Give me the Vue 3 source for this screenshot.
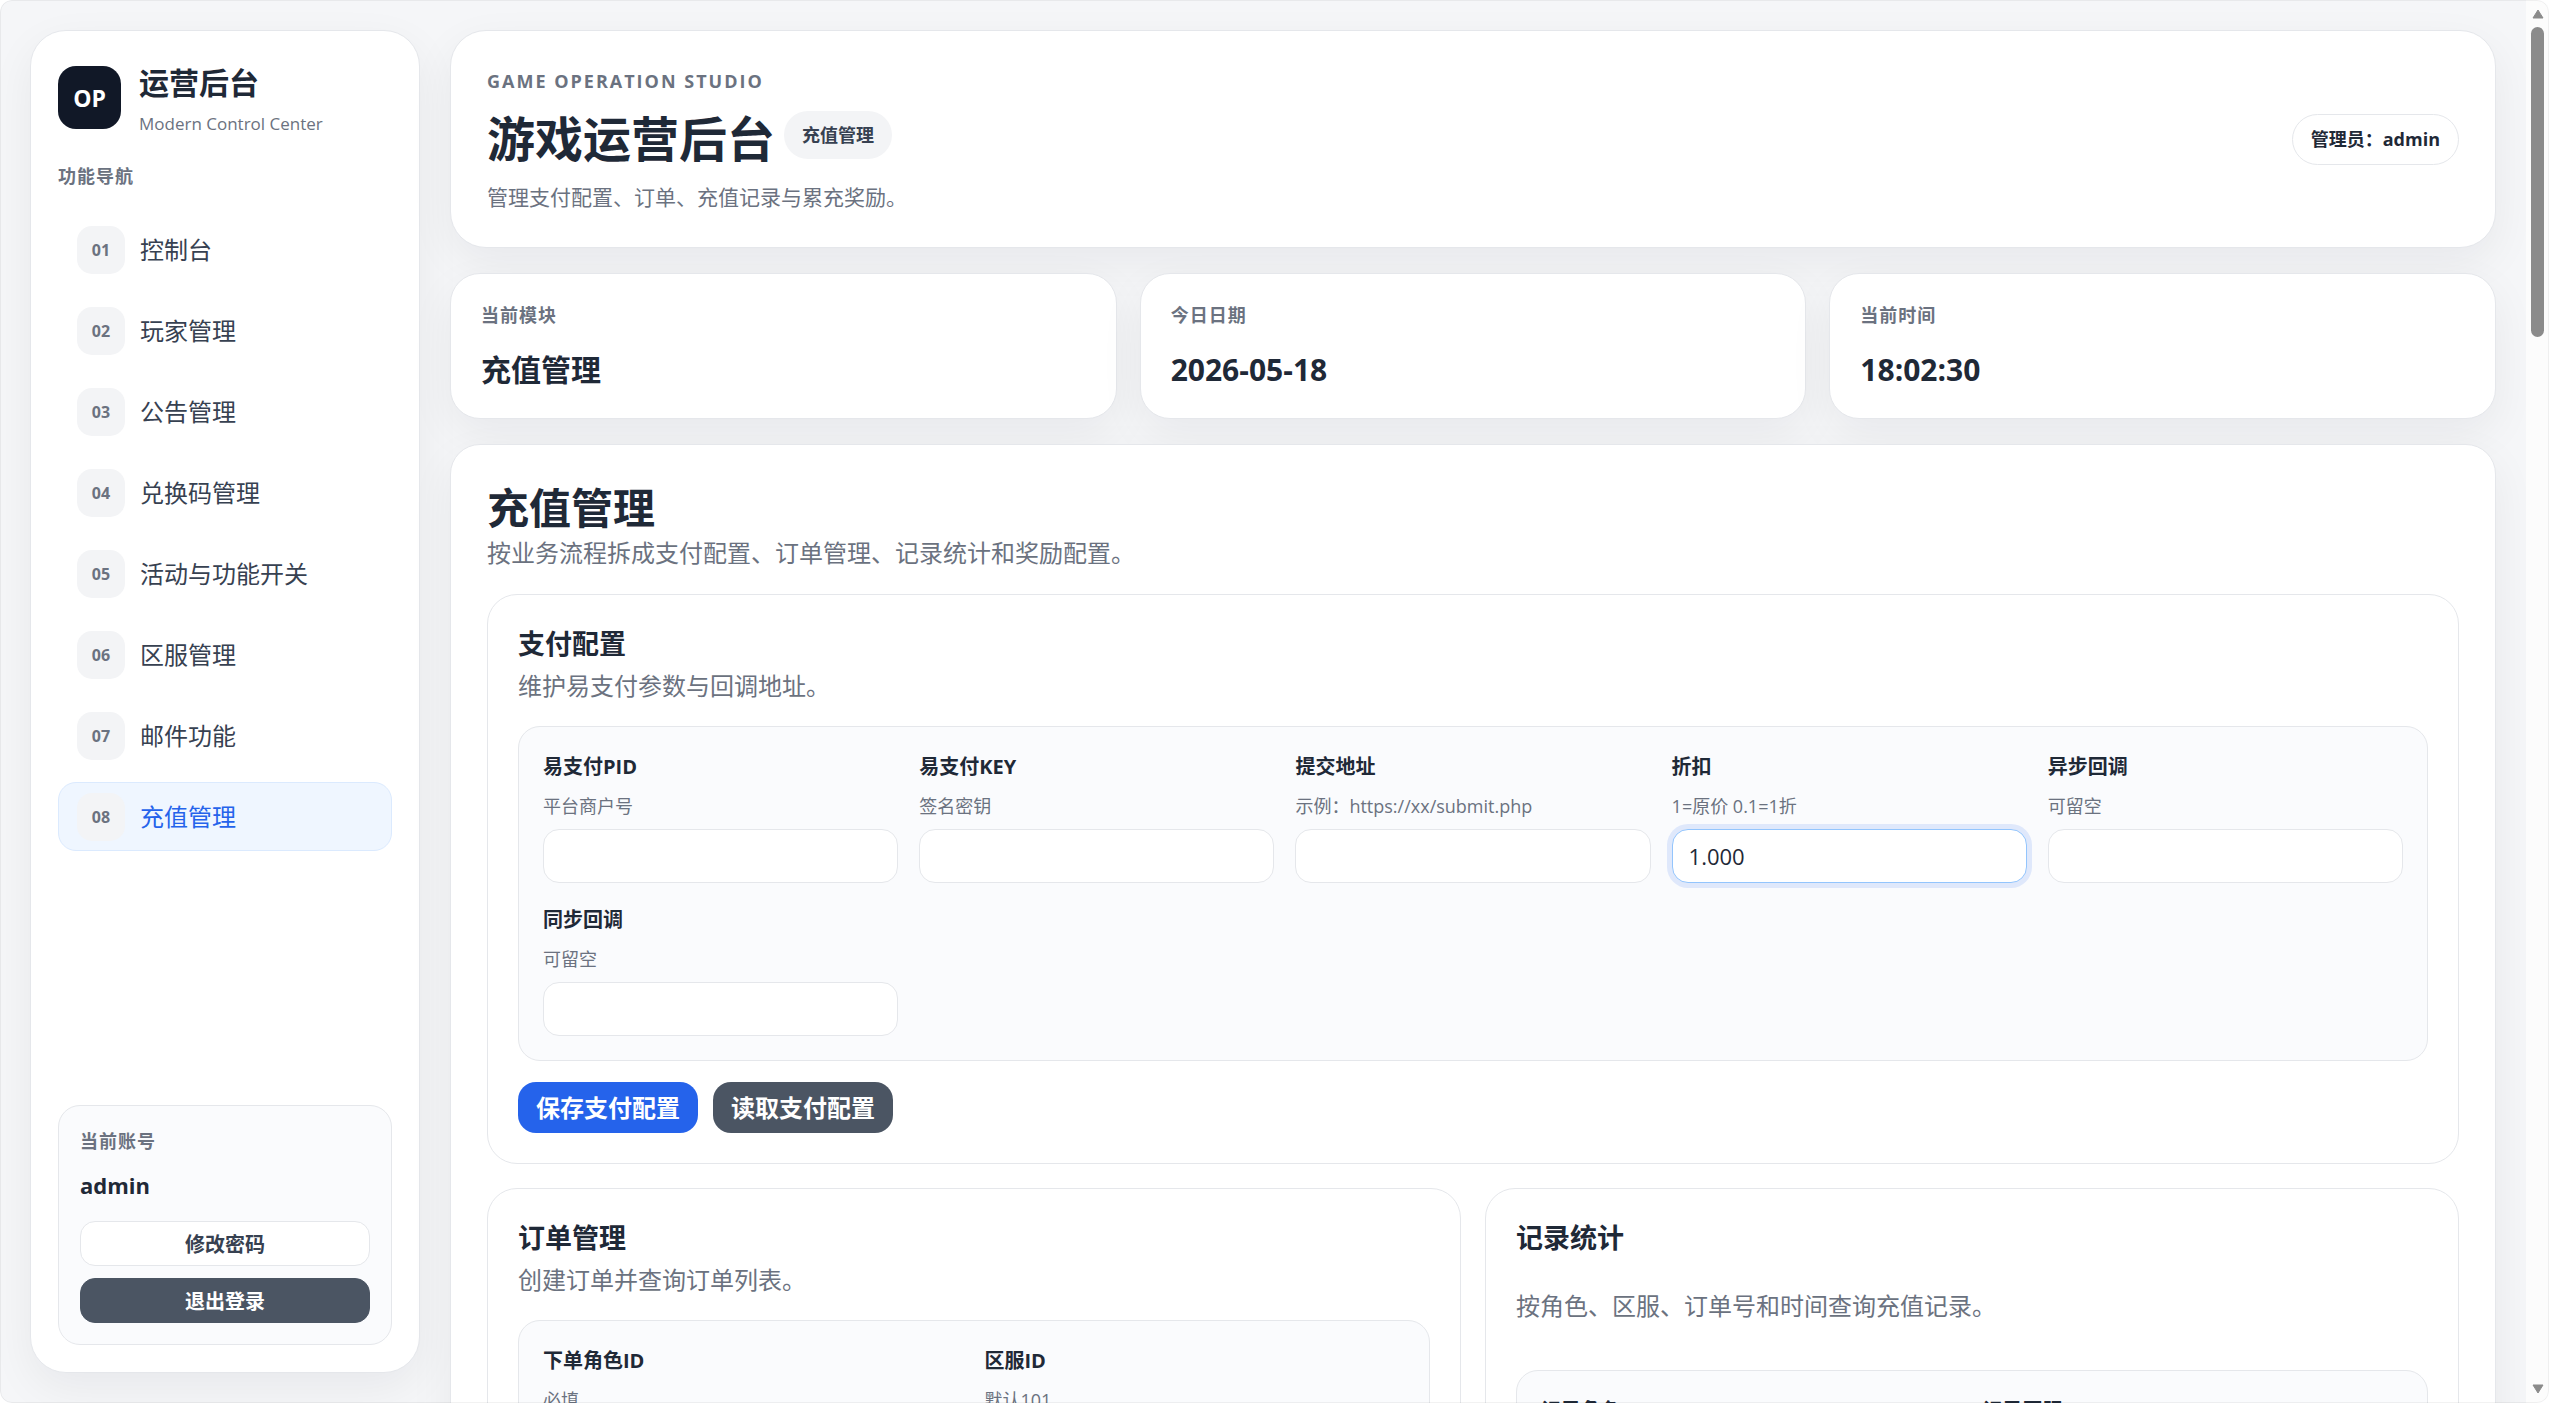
<script setup>
import { ref } from 'vue'

const navItems = [
  '控制台',
  '玩家管理',
  '公告管理',
  '兑换码管理',
  '活动与功能开关',
  '区服管理',
  '邮件功能',
  '充值管理',
].map((title, i) => ({ title, no: String(i + 1).padStart(2, '0') }))

const activeNo = ref('08')

const stats = [
  { label: '当前模块', value: '充值管理' },
  { label: '今日日期', value: '2026-05-18' },
  { label: '当前时间', value: '18:02:30' },
]

const payFields = ref([
  { id: 'pay-pid', label: '易支付PID', hint: '平台商户号', value: '' },
  { id: 'pay-key', label: '易支付KEY', hint: '签名密钥', value: '' },
  { id: 'pay-url', label: '提交地址', hint: '示例：https://xx/submit.php', value: '' },
  { id: 'pay-rate', label: '折扣', hint: '1=原价 0.1=1折', value: '1.000', current: true },
  { id: 'pay-notify', label: '异步回调', hint: '可留空', value: '' },
  { id: 'pay-return', label: '同步回调', hint: '可留空', value: '' },
])

const orderFields = ref([
  { id: 'order-role', label: '下单角色ID', hint: '必填', value: '' },
  { id: 'order-zone', label: '区服ID', hint: '默认101', value: '' },
])

const recordFields = ref([
  { id: 'record-role', label: '记录角色', hint: '可留空', value: '' },
  { id: 'record-zone', label: '记录区服', hint: '可留空', value: '' },
])
</script>

<template>
  <div class="window">
    <div class="page">
      <aside class="sidebar">
        <div class="brand">
          <div class="brand-logo">OP</div>
          <div>
            <div class="brand-title">运营后台</div>
            <div class="brand-sub">Modern Control Center</div>
          </div>
        </div>
        <div class="caption nav-caption">功能导航</div>
        <nav class="nav">
          <a
            v-for="item in navItems"
            :key="item.no"
            href="#"
            class="nav-item"
            :class="{ active: item.no === activeNo }"
            @click.prevent="activeNo = item.no"
          >
            <span class="nav-no">{{ item.no }}</span>
            <span>{{ item.title }}</span>
          </a>
        </nav>
        <div class="account">
          <div class="caption">当前账号</div>
          <div class="account-name">admin</div>
          <div class="account-actions">
            <button type="button" class="side-btn">修改密码</button>
            <button type="button" class="side-btn dark">退出登录</button>
          </div>
        </div>
      </aside>

      <main class="main">
        <header class="card hero">
          <div>
            <div class="eyebrow">GAME OPERATION STUDIO</div>
            <div class="hero-row">
              <h1>游戏运营后台</h1>
              <span class="tag">充值管理</span>
            </div>
            <p class="hero-desc">管理支付配置、订单、充值记录与累充奖励。</p>
          </div>
          <div class="admin-pill">管理员：admin</div>
        </header>

        <section class="stats">
          <div v-for="s in stats" :key="s.label" class="card stat">
            <div class="caption">{{ s.label }}</div>
            <div class="stat-value">{{ s.value }}</div>
          </div>
        </section>

        <section class="card module">
          <h2>充值管理</h2>
          <p class="desc">按业务流程拆成支付配置、订单管理、记录统计和奖励配置。</p>

          <div class="blocks">
            <section class="block wide">
              <h3>支付配置</h3>
              <p class="desc">维护易支付参数与回调地址。</p>
              <div class="panel five">
                <div v-for="f in payFields" :key="f.id" class="field">
                  <label :for="f.id">{{ f.label }}</label>
                  <small>{{ f.hint }}</small>
                  <input :id="f.id" v-model="f.value" type="text" :class="{ current: f.current }" />
                </div>
              </div>
              <div class="actions">
                <button type="button" class="btn primary">保存支付配置</button>
                <button type="button" class="btn">读取支付配置</button>
              </div>
            </section>

            <section class="block">
              <h3>订单管理</h3>
              <p class="desc">创建订单并查询订单列表。</p>
              <div class="panel two">
                <div v-for="f in orderFields" :key="f.id" class="field">
                  <label :for="f.id">{{ f.label }}</label>
                  <small>{{ f.hint }}</small>
                  <input :id="f.id" v-model="f.value" type="text" />
                </div>
              </div>
            </section>

            <section class="block loose">
              <h3>记录统计</h3>
              <p class="desc">按角色、区服、订单号和时间查询充值记录。</p>
              <div class="panel two">
                <div v-for="f in recordFields" :key="f.id" class="field">
                  <label :for="f.id">{{ f.label }}</label>
                  <small>{{ f.hint }}</small>
                  <input :id="f.id" v-model="f.value" type="text" />
                </div>
              </div>
            </section>
          </div>
        </section>
      </main>
    </div>

    <div class="scrollbar" aria-hidden="true">
      <svg class="arrow" viewBox="0 0 12 10"><path d="M6 1 L11 9 H1 Z" /></svg>
      <div class="track"><div class="thumb"></div></div>
      <svg class="arrow" viewBox="0 0 12 10"><path d="M6 9 L11 1 H1 Z" /></svg>
    </div>
  </div>
</template>

<style>
html,
body {
  margin: 0;
  background: #ffffff;
}
</style>

<style scoped>
* {
  box-sizing: border-box;
}

.window {
  position: relative;
  display: flex;
  height: 100vh;
  overflow: hidden;
  border-radius: 12px;
  background: #f5f6f8;
  color: #1f2937;
  font-family: "Open Sans", "Noto Sans CJK SC", sans-serif;
  font-size: 24px;
  line-height: 36px;
}

.window::after {
  content: "";
  position: absolute;
  inset: 0;
  border: 1px solid rgba(0, 0, 0, 0.05);
  border-radius: 12px;
  pointer-events: none;
}

.page {
  flex: 1;
  min-width: 0;
  display: flex;
  gap: 30px;
  padding: 30px;
  overflow: hidden;
}

h1,
h2,
h3,
p {
  margin: 0;
}

button,
input {
  font-family: inherit;
}

.sidebar,
.card {
  background: #ffffff;
  border: 1px solid #e5e7eb;
  box-shadow: 0 15px 45px rgba(15, 23, 42, 0.06);
}

.caption {
  font-size: 18px;
  line-height: 29px;
  font-weight: 700;
  letter-spacing: 1px;
  color: #6b7280;
}

/* Sidebar */
.sidebar {
  flex: none;
  width: 390px;
  display: flex;
  flex-direction: column;
  padding: 27px;
  border-radius: 36px;
}

.brand {
  display: flex;
  align-items: center;
  gap: 18px;
}

.brand-logo {
  width: 63px;
  height: 63px;
  border-radius: 18px;
  background: #111827;
  color: #ffffff;
  font-size: 23px;
  line-height: 64px;
  font-weight: 700;
  text-align: center;
}

.brand-title {
  margin-bottom: 2px;
  font-size: 30px;
  line-height: 50px;
  font-weight: 700;
}

.brand-sub {
  font-size: 17px;
  line-height: 27px;
  color: #6b7280;
}

.nav-caption {
  margin: 25px 0 24px;
}

.nav {
  display: flex;
  flex-direction: column;
  gap: 12px;
}

.nav-item {
  display: flex;
  align-items: center;
  gap: 15px;
  height: 69px;
  padding: 0 18px;
  border: 1px solid transparent;
  border-radius: 18px;
  color: #374151;
  text-decoration: none;
}

.nav-item.active {
  background: #eff6ff;
  border-color: #dbeafe;
  color: #2563eb;
}

.nav-no {
  width: 48px;
  height: 48px;
  border-radius: 15px;
  background: #f3f4f6;
  color: #6b7280;
  font-size: 16px;
  line-height: 48px;
  font-weight: 700;
  text-align: center;
}

.account {
  margin-top: auto;
  padding: 21px;
  border: 1px solid #e5e7eb;
  border-radius: 22px;
  background: #fafbfd;
}

.account-name {
  margin: 11px 0 18px;
  font-size: 22px;
  font-weight: 700;
}

.account-actions {
  display: flex;
  flex-direction: column;
  gap: 12px;
}

.side-btn {
  height: 45px;
  padding: 2px 0 0;
  border: 1px solid #e5e7eb;
  border-radius: 15px;
  background: #ffffff;
  color: #374151;
  font-size: 20px;
  line-height: 30px;
  font-weight: 700;
}

.side-btn.dark {
  border-color: #4b5563;
  background: #4b5563;
  color: #ffffff;
}

/* Main column */
.main {
  flex: 1;
  min-width: 0;
  display: flex;
  flex-direction: column;
  gap: 25px;
}

.main > * {
  flex: none;
}

.card {
  border-radius: 30px;
}

.hero {
  display: flex;
  align-items: center;
  justify-content: space-between;
  padding: 36px;
  border-radius: 36px;
}

.eyebrow {
  font-size: 18px;
  line-height: 29px;
  font-weight: 700;
  letter-spacing: 2px;
  color: #6b7280;
}

.hero-row {
  display: flex;
  align-items: flex-start;
  gap: 9px;
  margin: 15px 0 8px;
}

h1 {
  font-size: 48px;
  line-height: 56px;
  font-weight: 700;
}

.hero-row h1 {
  padding-bottom: 8px;
}

.tag {
  padding: 0 18px;
  border-radius: 24px;
  background: #f3f4f6;
  color: #374151;
  font-size: 18px;
  line-height: 48px;
  font-weight: 700;
}

.hero-desc {
  font-size: 21px;
  line-height: 28px;
  color: #6b7280;
}

.admin-pill {
  padding: 0 18px;
  border: 1px solid #e5e7eb;
  border-radius: 26px;
  font-size: 18px;
  line-height: 49px;
  font-weight: 700;
}

.stats {
  display: grid;
  grid-template-columns: repeat(3, 1fr);
  gap: 23px;
}

.stat {
  padding: 27px 30px 29px;
}

.stat-value {
  margin-top: 20px;
  font-size: 30px;
  line-height: 39px;
  font-weight: 700;
}

.module {
  padding: 36px;
}

h2 {
  font-size: 42px;
  line-height: 54px;
  font-weight: 700;
}

.desc {
  color: #6b7280;
}

.blocks {
  display: grid;
  grid-template-columns: repeat(2, 1fr);
  gap: 24px;
  margin-top: 23px;
}

.block {
  padding: 30px;
  border: 1px solid #e5e7eb;
  border-radius: 30px;
}

.block.wide {
  grid-column: 1 / -1;
}

h3 {
  font-size: 27px;
  line-height: 38px;
  font-weight: 700;
}

.block .desc {
  margin: 5px 0 22px;
}

.block.loose .desc {
  margin: 31px 0 46px;
}

.panel {
  display: grid;
  gap: 21px;
  padding: 24px;
  border: 1px solid #e5e7eb;
  border-radius: 22px;
  background: #fafbfd;
}

.panel.five {
  grid-template-columns: repeat(5, 1fr);
}

.panel.two {
  grid-template-columns: repeat(2, 1fr);
}

.field {
  display: flex;
  flex-direction: column;
  gap: 9px;
  min-width: 0;
}

.field label {
  font-size: 20px;
  line-height: 32px;
  font-weight: 700;
}

.field small {
  font-size: 18px;
  line-height: 28px;
  color: #6b7280;
}

.field input {
  width: 100%;
  height: 54px;
  padding: 0 16px;
  border: 1px solid #e5e7eb;
  border-radius: 16px;
  background: #ffffff;
  color: #1f2937;
  font-size: 22px;
  outline: none;
}

.field input.current,
.field input:focus {
  border-color: #93c5fd;
  box-shadow: 0 0 0 5px rgba(37, 99, 235, 0.12);
}

.actions {
  display: flex;
  gap: 15px;
  margin-top: 21px;
}

.btn {
  height: 51px;
  padding: 0 18px;
  border: 0;
  border-radius: 18px;
  background: #4b5563;
  color: #ffffff;
  font-size: 24px;
  line-height: 36px;
  font-weight: 700;
}

.btn.primary {
  background: #2563eb;
}

/* Scrollbar */
.scrollbar {
  flex: none;
  width: 23px;
  display: flex;
  flex-direction: column;
  align-items: center;
  padding: 9px 0;
  background: #fcfcfc;
}

.arrow {
  width: 12px;
  height: 10px;
  fill: #8b8b8b;
  stroke: #8b8b8b;
  stroke-width: 1;
  stroke-linejoin: round;
}

.track {
  flex: 1;
  padding: 8px 0;
}

.thumb {
  width: 13px;
  height: 23%;
  border-radius: 7px;
  background: #8b8b8b;
}
</style>
